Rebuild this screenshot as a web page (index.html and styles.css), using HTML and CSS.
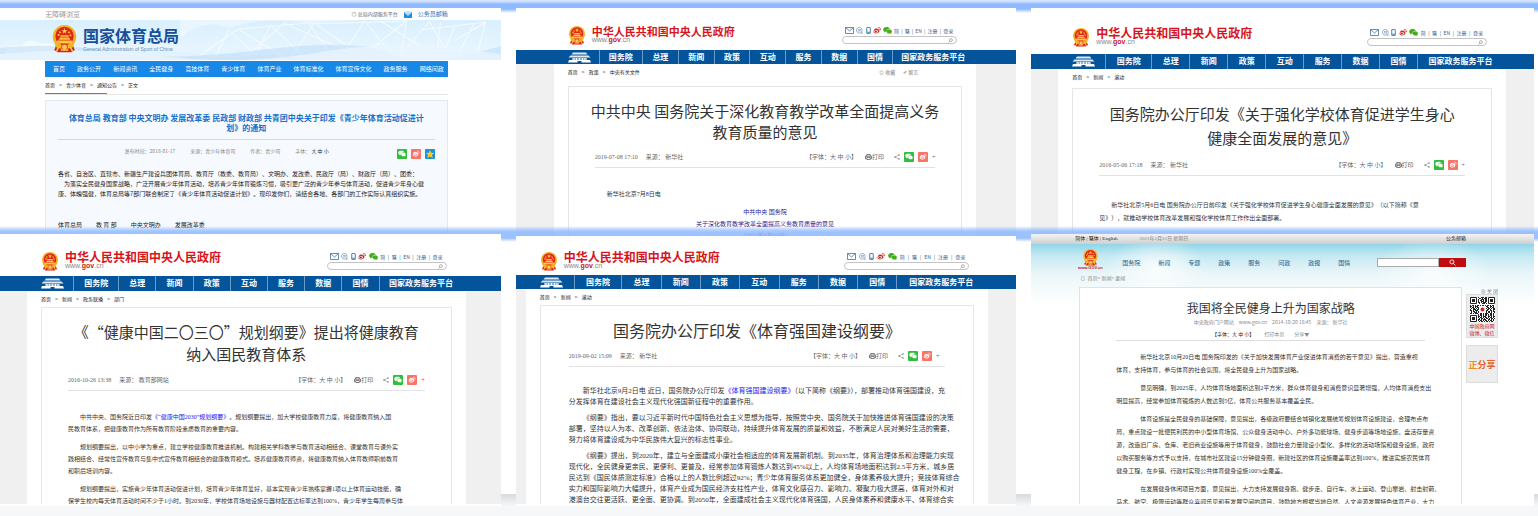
FILE: index.html
```html
<!DOCTYPE html>
<html lang="zh-CN">
<head>
    <meta charset="UTF-8">
    <meta name="viewport" content="width=device-width, initial-scale=1.0">
    <title>体育政策文件</title>
    <link rel="stylesheet" href="styles.css">
</head>
<body>
    <!-- Shared icons -->
    <svg class="sprite" aria-hidden="true">
        <symbol id="emblem" viewBox="0 0 36 38">
            <path d="M7 27h22l3 7-5 3H9l-5-3z" fill="#d8221b"/>
            <circle cx="18" cy="16" r="16" fill="#f3b229"/>
            <circle cx="18" cy="15" r="12.500" fill="#e02619"/>
            <path d="M18 4l1 3h3l-2.500 2 1 3-2.500-2-2.500 2 1-3-2.500-2h3z" fill="#ffdb4d"/>
            <path d="M11 9l2 1-1 1zM24 9l1 2-2-1zM9 13l2 0-1 2zM26 13l1 2-2-1z" fill="#ffdb4d" stroke="#ffdb4d"/>
            <path d="M10 20l2-3h12l2 3zM12 16l1-2h10l1 2zM8 21h20v4H8z" fill="#ffc93c"/>
            <path d="M5 25q13 6 26 0l-1 5q-12 5-24 0z" fill="#f3b229"/>
            <circle cx="18" cy="30" r="4" fill="#f7cf4a" stroke="#d8221b"/>
            <path d="M10 30l-3 6M26 30l3 6M13 34h10" stroke="#ffcf45" stroke-width="2"/>
        </symbol>
        <symbol id="gate" viewBox="0 0 46 22">
            <path d="M10 1h26l3 4H7zM5 7h36l4 4H1z" fill="#dfe9f3"/>
            <path d="M8 12h30v4H8z" fill="#8fb0cf"/>
            <path d="M12 12v4M17 12v4M23 12v4M29 12v4M34 12v4" stroke="#fff" stroke-width="2"/>
            <path d="M2 16h42l2 5H27v-3h-8v3H0z" fill="#fff"/>
        </symbol>
        <symbol id="mail" viewBox="0 0 18 14">
            <path d="M1 1h16v12H1zM1 1l8 7 8-7" fill="none" stroke="#2f6ba5" stroke-width="1.500"/>
        </symbol>
        <symbol id="chat" viewBox="0 0 16 16">
            <path d="M8 1a6.500 6.500 0 1 0 3 12l3 2-1-4A6.500 6.500 0 0 0 8 1zM4.500 6h7M4.500 9h7" fill="none" stroke="#3f78ae" stroke-width="1.300"/>
        </symbol>
        <symbol id="phone" viewBox="0 0 10 16">
            <rect x="1" y="1" width="8" height="14" rx="1" fill="none" stroke="#2f6ba5" stroke-width="2"/>
            <path d="M2 12h6" stroke="#2f6ba5" stroke-width="2"/>
        </symbol>
        <symbol id="weibo" viewBox="0 0 18 16">
            <path d="M8 5c2-2 5-1 4 1 3 0 3 3 2 5-2 4-9 5-12 2C-1 10 4 3 7 3c1 0 2 1 1 2z" fill="currentColor"/>
            <ellipse cx="7" cy="10" rx="4" ry="3" fill="#fff"/>
            <circle cx="6.500" cy="10" r="2" fill="#333"/>
            <path d="M11 1c4-1 7 2 6 6M12 4c2 0 3 1 2 3" fill="none" stroke="currentColor" stroke-width="1.500"/>
        </symbol>
        <symbol id="weibo-flat" viewBox="0 0 18 16">
            <path d="M8 5c2-2 5-1 4 1 3 0 3 3 2 5-2 4-9 5-12 2C-1 10 4 3 7 3c1 0 2 1 1 2z" fill="currentColor"/>
            <ellipse cx="7" cy="10" rx="4" ry="3" fill="#fa7366"/>
            <circle cx="6.500" cy="10" r="2" fill="currentColor"/>
            <path d="M11 1c4-1 7 2 6 6M12 4c2 0 3 1 2 3" fill="none" stroke="currentColor" stroke-width="1.500"/>
        </symbol>
        <symbol id="wechat" viewBox="0 0 20 16">
            <path d="M8 0C3 0 0 3 0 6c0 2 1 3 3 4l-1 3 3-2h3c-1-5 3-7 7-7-1-3-4-4-7-4z" fill="currentColor"/>
            <path d="M14 5c-3 0-6 2-6 5s3 5 6 5h2l3 1-1-2c1-1 2-2 2-4 0-3-3-5-6-5z" fill="currentColor"/>
        </symbol>
        <symbol id="share" viewBox="0 0 12 12">
            <path d="M10 2L2 6l8 4" fill="none" stroke="#777"/>
            <circle cx="10" cy="2" r="1.500" fill="#777"/><circle cx="2" cy="6" r="1.500" fill="#777"/><circle cx="10" cy="10" r="1.500" fill="#777"/>
        </symbol>
        <symbol id="print" viewBox="0 0 16 14">
            <path d="M4 5V1h8v4M3 11H1V5h14v6h-2M4 8h8v5H4z" fill="none" stroke="#555" stroke-width="1.800"/>
        </symbol>
        <symbol id="lens" viewBox="0 0 12 12">
            <circle cx="7" cy="5" r="3.500" fill="none" stroke="currentColor" stroke-width="1.500"/>
            <path d="M4.500 7.500L1 11" stroke="currentColor" stroke-width="1.500"/>
        </symbol>
        <symbol id="star" viewBox="0 0 20 20">
            <path d="M10 2l2.500 5.500 6 .5-4.500 4 1.500 6-5.500-3-5.500 3L6 12 1.500 8l6-.5z" fill="currentColor"/>
        </symbol>
    </svg>

    <main>
        <section class="row row-top">
            <!-- 国家体育总局 -->
            <article class="shot sport">
                <div class="sport-top">
                    <a href="#">无障碍浏览</a>
                    <span class="sport-links"><a href="#">◎ 总局内部服务平台</a>
                        <svg width="8" height="7" viewBox="0 0 16 14"><path d="M0 2h16v12H0z" fill="#1f8fe6"/><path d="M1 3l7 6 7-6M3 0h10v3H3z" fill="#9bd3fb" stroke="#fff"/></svg>
                        <a class="mailbox" href="#">公务员邮箱</a></span>
                </div>
                <header class="sport-banner">
                    <svg class="sport-bg" viewBox="0 0 500 40" preserveAspectRatio="none" aria-hidden="true">
                        <path d="M5 32q5-8 16-6 8-10 20-2 12-3 17 5l10 10H0z" fill="#fff" opacity=".6"/>
                        <path d="M180 18q20-20 50-10 30-12 80-5l50-3H180z" fill="#fff" opacity=".4"/>
                        <path d="M200 35L238 9l45 28M215 38l13-28 28 25 14-30 35 33M238 9l70-6 26 36M246 36l38-33 51 23M290 38l24-35 50 35M310 4l96-3-48 38M340 38L364 1l31 38M380 1l60 38 15-34M395 39l34-37 22 37M406 2l-7 38M440 2l-4 37M420 10l65-8-10 37M455 20l29-17M456 37l18-34" fill="none" stroke="#fff" opacity=".7"/>
                        <path d="M0 28q60-6 110 4t150-2 130 4 110-8v14H0z" fill="#b9daf8" opacity=".5"/>
                        <path d="M0 34q80-8 160 2t160-4 180 2v6H0z" fill="#e8f5ff" opacity=".8"/>
                    </svg>
                    <svg class="sport-emblem" width="27" height="28"><use href="#emblem"/></svg>
                    <div class="sport-name">
                        <strong>国家体育总局</strong>
                        <small>General Administration of Sport of China</small>
                    </div>
                </header>
                <nav class="sport-nav">
                    <a href="#">首页</a><a href="#">政务公开</a><a href="#">新闻资讯</a><a href="#">全民健身</a><a href="#">竞技体育</a><a href="#">青少体育</a><a href="#">体育产业</a><a href="#">体育标准化</a><a href="#">体育宣传文化</a><a href="#">政务服务</a><a href="#">网络问政</a>
                </nav>
                <div class="crumb sport-crumb"><a href="#">首页</a><i>&gt;</i><a href="#">青少体育</a><i>&gt;</i><a href="#">通知公告</a><i>&gt;</i><span>正文</span></div>
                <div class="sport-doc">
                    <h1>体育总局 教育部 中央文明办 发展改革委 民政部 财政部 共青团中央关于印发《青少年体育活动促进计<br>划》的通知</h1>
                    <div class="sport-meta">
                        <span>发布时间：2018-01-17</span><span>来源：青少年体育司</span><span>作者：青少司</span><span>字体： <b>大 中 小</b></span>
                        <div class="sport-share">
                            <svg class="tile green" viewBox="-3 -4 26 26"><use href="#wechat" width="20" height="16"/></svg>
                            <svg class="tile red" viewBox="-3 -4 26 26"><use href="#weibo-flat" width="20" height="17"/></svg>
                            <svg class="tile blue" viewBox="0 0 20 20"><use href="#star"/></svg>
                        </div>
                    </div>
                    <div class="sport-text">
                        <p>各省、自治区、直辖市、新疆生产建设兵团体育局、教育厅（教委、教育局）、文明办、发改委、民政厅（局）、财政厅（局）、团委：</p>
                        <p class="indent">为落实全民健身国家战略，广泛开展青少年体育活动，培养青少年体育锻炼习惯，吸引更广泛的青少年参与体育活动，促进青少年身心健康、体魄强健，体育总局等7部门联合制定了《青少年体育活动促进计划》。现印发你们，请结合各地、各部门的工作实际认真组织实施。</p>
                    </div>
                    <div class="signers"><span>体育总局</span><span>教 育 部</span><span>中央文明办</span><span>发展改革委</span></div>
                </div>
            </article>

            <article class="shot gov gov-a">
                <header class="gov-head">
                    <svg width="18" height="19"><use href="#emblem"/></svg>
                    <div class="brand"><strong>中华人民共和国中央人民政府</strong><small>www.<b>gov</b>.cn</small></div>
                    <div class="tools">
                        <div class="tool-row">
                            <svg width="9" height="7"><use href="#mail"/></svg><svg width="7" height="7"><use href="#chat"/></svg><svg width="5" height="7"><use href="#phone"/></svg><svg class="wb" width="8" height="7"><use href="#weibo"/></svg><svg class="wx" width="9" height="7"><use href="#wechat"/></svg>
                            <a href="#">简</a>|<a href="#">繁</a>|<a href="#">EN</a>|<a href="#">注册</a>|<a href="#">登录</a>
                        </div>
                        <form class="search"><input type="text" aria-label="搜索"><button type="button" aria-label="搜索"><svg width="5" height="5"><use href="#lens"/></svg></button></form>
                    </div>
                </header>
                <nav class="gov-nav">
                    <a href="#" aria-label="首页"><svg width="23" height="11"><use href="#gate"/></svg></a><a href="#">国务院</a><a href="#">总理</a><a href="#">新闻</a><a href="#">政策</a><a href="#">互动</a><a href="#">服务</a><a href="#">数据</a><a href="#">国情</a><a href="#">国家政务服务平台</a>
                </nav>
                <div class="gov-page">
                    <div class="crumb"><a href="#">首页</a><i>&gt;</i><a href="#">政策</a><i>&gt;</i><a href="#">中央有关文件</a>
                        <span class="keep"><a href="#">☆ 收藏</a><a href="#">✐ 留言</a></span></div>
                    <div class="doc">
                        <h1>中共中央 国务院关于深化教育教学改革全面提高义务<br>教育质量的意见</h1>
                        <div class="meta">
                            <span>2019-07-08 17:10</span><span>来源： 新华社</span>
                            <span class="size">【字体：大 中 小】</span><a href="#"><svg width="7" height="6"><use href="#print"/></svg>打印</a>
                            <span class="share"><svg width="6" height="6"><use href="#share"/></svg><svg class="tile green" viewBox="-3 -4 26 26"><use href="#wechat" width="20" height="16"/></svg><svg class="tile red" viewBox="-3 -4 26 26"><use href="#weibo-flat" width="20" height="17"/></svg>+</span>
                        </div>
                        <div class="text">
                            <p>新华社北京7月8日电</p>
                            <p class="notice">中共中央 国务院<br>关于深化教育教学改革全面提高义务教育质量的意见<br>（2019年6月23日）</p>
                        </div>
                    </div>
                </div>
            </article>

            <article class="shot gov gov-b">
                <header class="gov-head">
                    <svg width="18" height="19"><use href="#emblem"/></svg>
                    <div class="brand"><strong>中华人民共和国中央人民政府</strong><small>www.<b>gov</b>.cn</small></div>
                    <div class="tools">
                        <div class="tool-row">
                            <svg width="9" height="7"><use href="#mail"/></svg><svg width="7" height="7"><use href="#chat"/></svg><svg width="5" height="7"><use href="#phone"/></svg><svg class="wb" width="8" height="7"><use href="#weibo"/></svg><svg class="wx" width="9" height="7"><use href="#wechat"/></svg>
                            <a href="#">简</a>|<a href="#">繁</a>|<a href="#">EN</a>|<a href="#">注册</a>|<a href="#">登录</a>
                        </div>
                        <form class="search"><input type="text" aria-label="搜索"><button type="button" aria-label="搜索"><svg width="5" height="5"><use href="#lens"/></svg></button></form>
                    </div>
                </header>
                <nav class="gov-nav">
                    <a href="#" aria-label="首页"><svg width="23" height="11"><use href="#gate"/></svg></a><a href="#">国务院</a><a href="#">总理</a><a href="#">新闻</a><a href="#">政策</a><a href="#">互动</a><a href="#">服务</a><a href="#">数据</a><a href="#">国情</a><a href="#">国家政务服务平台</a>
                </nav>
                <div class="gov-page">
                    <div class="crumb"><a href="#">首页</a><i>&gt;</i><a href="#">新闻</a><i>&gt;</i><a href="#">滚动</a></div>
                    <div class="doc">
                        <h1>国务院办公厅印发《关于强化学校体育促进学生身心<br>健康全面发展的意见》</h1>
                        <div class="meta">
                            <span>2016-05-06 17:18</span><span>来源： 新华社</span>
                            <span class="size">【字体：大 中 小】</span><a href="#"><svg width="7" height="6"><use href="#print"/></svg>打印</a>
                            <span class="share"><svg width="6" height="6"><use href="#share"/></svg><svg class="tile green" viewBox="-3 -4 26 26"><use href="#wechat" width="20" height="16"/></svg><svg class="tile red" viewBox="-3 -4 26 26"><use href="#weibo-flat" width="20" height="17"/></svg>+</span>
                        </div>
                        <div class="text">
                            <p>新华社北京5月6日电 国务院办公厅日前印发《关于强化学校体育促进学生身心健康全面发展的意见》（以下简称《意<br>见》），就推动学校体育改革发展和强化学校体育工作作出全面部署。</p>
                        </div>
                    </div>
                </div>
            </article>
        </section>

        <section class="row row-bottom">
            <article class="shot gov gov-c">
                <header class="gov-head">
                    <svg width="18" height="19"><use href="#emblem"/></svg>
                    <div class="brand"><strong>中华人民共和国中央人民政府</strong><small>www.<b>gov</b>.cn</small></div>
                    <div class="tools">
                        <div class="tool-row">
                            <svg width="9" height="7"><use href="#mail"/></svg><svg width="7" height="7"><use href="#chat"/></svg><svg width="5" height="7"><use href="#phone"/></svg><svg class="wb" width="8" height="7"><use href="#weibo"/></svg><svg class="wx" width="9" height="7"><use href="#wechat"/></svg>
                            <a href="#">简</a>|<a href="#">繁</a>|<a href="#">EN</a>|<a href="#">注册</a>|<a href="#">登录</a>
                        </div>
                        <form class="search"><input type="text" aria-label="搜索"><button type="button" aria-label="搜索"><svg width="5" height="5"><use href="#lens"/></svg></button></form>
                    </div>
                </header>
                <nav class="gov-nav">
                    <a href="#" aria-label="首页"><svg width="23" height="11"><use href="#gate"/></svg></a><a href="#">国务院</a><a href="#">总理</a><a href="#">新闻</a><a href="#">政策</a><a href="#">互动</a><a href="#">服务</a><a href="#">数据</a><a href="#">国情</a><a href="#">国家政务服务平台</a>
                </nav>
                <div class="gov-page">
                    <div class="crumb"><a href="#">首页</a><i>&gt;</i><a href="#">新闻</a><i>&gt;</i><a href="#">政务联播</a><i>&gt;</i><a href="#">部门</a></div>
                    <div class="doc">
                        <h1>《“健康中国二〇三〇”规划纲要》提出将健康教育<br>纳入国民教育体系</h1>
                        <div class="meta">
                            <span>2016-10-26 13:38</span><span>来源： 教育部网站</span>
                            <span class="size">【字体：大 中 小】</span><a href="#"><svg width="7" height="6"><use href="#print"/></svg>打印</a>
                            <span class="share"><svg width="6" height="6"><use href="#share"/></svg><svg class="tile green" viewBox="-3 -4 26 26"><use href="#wechat" width="20" height="16"/></svg><svg class="tile red" viewBox="-3 -4 26 26"><use href="#weibo-flat" width="20" height="17"/></svg>+</span>
                        </div>
                        <div class="text">
                            <p>中共中央、国务院近日印发<a href="#">《“健康中国2030”规划纲要》</a>。规划纲要提出，加大学校健康教育力度，将健康教育纳入国<br>民教育体系，把健康教育作为所有教育阶段素质教育的重要内容。</p>
                            <p>规划纲要提出，以中小学为重点，建立学校健康教育推进机制。构建相关学科教学与教育活动相结合、课堂教育与课外实<br>践相结合、经常性宣传教育与集中式宣传教育相结合的健康教育模式。培养健康教育师资，将健康教育纳入体育教师职前教育<br>和职后培训内容。</p>
                            <p>规划纲要提出，实施青少年体育活动促进计划，培育青少年体育爱好，基本实现青少年熟练掌握1项以上体育运动技能，确<br>保学生校内每天体育活动时间不少于1小时。到2030年，学校体育场地设施与器材配置达标率达到100%，青少年学生每周参与体</p>
                        </div>
                    </div>
                </div>
            </article>

            <article class="shot gov gov-d">
                <header class="gov-head">
                    <svg width="18" height="19"><use href="#emblem"/></svg>
                    <div class="brand"><strong>中华人民共和国中央人民政府</strong><small>www.<b>gov</b>.cn</small></div>
                    <div class="tools">
                        <div class="tool-row">
                            <svg width="9" height="7"><use href="#mail"/></svg><svg width="7" height="7"><use href="#chat"/></svg><svg width="5" height="7"><use href="#phone"/></svg><svg class="wb" width="8" height="7"><use href="#weibo"/></svg><svg class="wx" width="9" height="7"><use href="#wechat"/></svg>
                            <a href="#">简</a>|<a href="#">繁</a>|<a href="#">EN</a>|<a href="#">注册</a>|<a href="#">登录</a>
                        </div>
                        <form class="search"><input type="text" aria-label="搜索"><button type="button" aria-label="搜索"><svg width="5" height="5"><use href="#lens"/></svg></button></form>
                    </div>
                </header>
                <nav class="gov-nav">
                    <a href="#" aria-label="首页"><svg width="23" height="11"><use href="#gate"/></svg></a><a href="#">国务院</a><a href="#">总理</a><a href="#">新闻</a><a href="#">政策</a><a href="#">互动</a><a href="#">服务</a><a href="#">数据</a><a href="#">国情</a><a href="#">国家政务服务平台</a>
                </nav>
                <div class="gov-page">
                    <div class="crumb"><a href="#">首页</a><i>&gt;</i><a href="#">新闻</a><i>&gt;</i><a href="#">滚动</a></div>
                    <div class="doc">
                        <h1>国务院办公厅印发《体育强国建设纲要》</h1>
                        <div class="meta">
                            <span>2019-09-02 15:09</span><span>来源： 新华社</span>
                            <span class="size">【字体：大 中 小】</span><a href="#"><svg width="7" height="6"><use href="#print"/></svg>打印</a>
                            <span class="share"><svg width="6" height="6"><use href="#share"/></svg><svg class="tile green" viewBox="-3 -4 26 26"><use href="#wechat" width="20" height="16"/></svg><svg class="tile red" viewBox="-3 -4 26 26"><use href="#weibo-flat" width="20" height="17"/></svg>+</span>
                        </div>
                        <div class="text">
                            <p>新华社北京9月2日电 近日，国务院办公厅印发<a href="#">《体育强国建设纲要》</a>（以下简称《纲要》），部署推动体育强国建设，充<br>分发挥体育在建设社会主义现代化强国新征程中的重要作用。</p>
                            <p>《纲要》指出，要以习近平新时代中国特色社会主义思想为指导，按照党中央、国务院关于加快推进体育强国建设的决策<br>部署，坚持以人为本、改革创新、依法治体、协同联动，持续提升体育发展的质量和效益，不断满足人民对美好生活的需要，<br>努力将体育建设成为中华民族伟大复兴的标志性事业。</p>
                            <p>《纲要》提出，到2020年，建立与全面建成小康社会相适应的体育发展新机制。到2035年，体育治理体系和治理能力实现<br>现代化，全民健身更亲民、更便利、更普及，经常参加体育锻炼人数达到45%以上，人均体育场地面积达到2.5平方米，城乡居<br>民达到《国民体质测定标准》合格以上的人数比例超过92%；青少年体育服务体系更加健全，身体素养极大提升；竞技体育综合<br>实力和国际影响力大幅提升，体育产业成为国民经济支柱性产业，体育文化感召力、影响力、凝聚力极大提高，体育对外和对<br>港澳台交往更活跃、更全面、更协调。到2050年，全面建成社会主义现代化体育强国，人民身体素养和健康水平、体育综合实</p>
                        </div>
                    </div>
                </div>
            </article>

            <!-- 旧版中国政府网 -->
            <article class="shot old">
                <div class="old-top"><span>简体 | 繁体 | English</span><time>2021年2月21日 星期日</time><a href="#">公务邮箱</a></div>
                <div class="old-sky">
                    <header class="old-head">
                        <div class="old-logo"><svg width="17" height="17"><use href="#emblem"/></svg><small>www.GOV.cn</small></div>
                        <nav class="old-nav"><a href="#">国务院</a><a href="#">新闻</a><a href="#">专题</a><a href="#">政策</a><a href="#">服务</a><a href="#">问政</a><a href="#">政报</a><a href="#">国情</a></nav>
                        <form class="old-search"><input type="text" aria-label="搜索"><button type="button" aria-label="搜索"><svg width="7" height="7"><use href="#lens" transform="matrix(-1 0 0 1 7 0)"/></svg></button></form>
                    </header>
                    <div class="old-crumb">⊙ &nbsp;首页&gt; 新闻&gt; 要闻</div>
                    <div class="old-main">
                        <div class="old-doc">
                            <h1>我国将全民健身上升为国家战略</h1>
                            <div class="old-meta"><span>中央政府门户网站</span><span>www.gov.cn</span><span>2014-10-20 18:45</span><span>来源： 新华社</span></div>
                            <div class="old-meta old-tools"><b>【字体：大 中 小】</b><span>打印本页</span><span>分享▼</span></div>
                            <div class="text">
                                <p>新华社北京10月20日电 国务院印发的《关于加快发展体育产业促进体育消费的若干意见》提出，营造重视<br>体育，支持体育，参与体育的社会氛围，将全民健身上升为国家战略。</p>
                                <p>意见明确，到2025年，人均体育场地面积达到2平方米，群众体育健身和消费意识显著增强，人均体育消费支出<br>明显提高，经常参加体育锻炼的人数达到5亿，体育公共服务基本覆盖全民。</p>
                                <p>体育设施是全民健身的基础保障，意见提出，各级政府要结合城镇化发展统筹规划体育设施建设，合理布点布<br>局，重点建设一批便民利民的中小型体育场馆、公众健身活动中心、户外多功能球场、健身步道等场地设施，盘活存量资<br>源，改造旧厂房、仓库、老旧商业设施等用于体育健身，鼓励社会力量建设小型化、多样化的活动场馆和健身设施，政府<br>以购买服务等方式予以支持，在城市社区建设15分钟健身圈，新建社区的体育设施覆盖率达到100%，推进实施农民体育<br>健身工程，在乡镇、行政村实现公共体育健身设施100%全覆盖。</p>
                                <p>在发展健身休闲项目方面，意见提出，大力支持发展健身跑、健步走、自行车、水上运动、登山攀岩、射击射箭、<br>马术、航空、极限运动等群众喜闻乐见和有发展空间的项目，鼓励地方根据当地自然、人文资源发展特色体育产业，大力</p>
                            </div>
                        </div>
                        <aside class="old-side">
                            <span class="close">⊗ 关 闭</span>
                            <div class="qr">
                                <svg width="25" height="25" viewBox="0 0 25 25" stroke="#222" fill="none">
                                    <path fill="#fff" stroke="none" d="M0 0h25v25H0z"/>
                                    <path d="M.5.5h6v6h-6zM18.500.5h6v6h-6zM.5 18.500h6v6h-6z"/>
                                    <path stroke-width="3" d="M2 3.500h3M20 3.500h3M2 21.500h3"/>
                                    <path stroke-dasharray="1 2 3 1 2 1" d="M8 .5h9M8 2.500h9M8 4.500h9M9 6.500h8M0 12.500h25M1 15.500h24"/>
                                    <path stroke-dasharray="2 1 1 1 3 2" d="M9 1.500h8M8 5.500h9M0 9.500h25M0 13.500h24M0 16.500h24M8 19.500h17M8 22.500h16"/>
                                    <path stroke-dasharray="1 1 2 1" d="M8 3.500h9M0 8.500h25M0 10.500h25M1 11.500h24M1 14.500h24M8 17.500h17M8 18.500h17M8 20.500h17M9 21.500h16M8 23.500h17M9 24.500h15"/>
                                    <path fill="#fff" stroke="none" d="M9 9h7v7H9z"/><circle cx="12.500" cy="12.500" r="2" fill="#d8221b" stroke="none"/>
                                </svg>
                                <span>中国政府网<br>微博、微信</span>
                            </div>
                            <button type="button" class="share-box"><em>正</em>分享</button>
                        </aside>
                    </div>
                </div>
            </article>
        </section>
    </main>
</body>
</html>
```
FILE: styles.css
```css
* {
    box-sizing: border-box;
}

body {
    margin: 0;
    background: #f5f7f9;
    font-family: "Noto Sans CJK SC", sans-serif;
    font-size: 6px;
    color: #333;
    overflow-x: hidden;
    text-spacing-trim: space-all;
}

a {
    color: inherit;
    text-decoration: none;
}

h1,
p,
form {
    margin: 0;
}

h1 {
    font-weight: normal;
    text-align: center;
    white-space: nowrap;
}

svg {
    flex: none;
}

i {
    font-style: normal;
}

input,
button {
    min-width: 0;
    padding: 0;
    border: 0;
    background: none;
    font: inherit;
}

.sprite {
    display: none;
}

/* Two rows of three pages, a blue band over each row */
.row {
    display: grid;
    grid-template-columns: 501fr 501fr 503fr;
    column-gap: 15px;
    padding-right: 4px;
}

.row-top {
    height: 238px;
    padding-top: 8px;
    background: linear-gradient(#dbe8fb 0, #c4daff 2px, #8fbaff 4px, #8fbaff 9px, #fff 13px);
}

.row-bottom {
    position: relative;
    height: 282px;
    margin-top: -12px;
    padding-top: 8px;
    background:
        linear-gradient(rgba(143, 186, 255, 0) 0, rgba(143, 186, 255, .7) 4px, rgba(133, 180, 255, .8) 6px, rgba(143, 186, 255, .9) 12px, rgba(255, 255, 255, 0) 16px) top / 100% 16px no-repeat,
        linear-gradient(transparent 12px, #fff 12px, #fff 268px, #d7dade 268px, #f5f7f9 280px);
}

.shot {
    overflow: hidden;
    min-width: 0;
    background: #fff;
}

.row-bottom .shot {
    height: 272px;
    border-bottom: 2px solid #fff;
}

.crumb {
    display: flex;
    font-size: 5px;
    line-height: 16px;
    color: #222;
}

.crumb i {
    width: 11px;
    text-align: center;
}

.tile {
    width: 10px;
    height: 10px;
    border-radius: 1px;
    color: #fff;
}

.green {
    background: #32bd3d;
}

.red {
    background: #fa7366;
}

.blue {
    background: #1593df;
    color: #ffc425;
}

/* 国家体育总局 */
.sport-top {
    display: flex;
    justify-content: space-between;
    align-items: center;
    height: 12px;
    padding: 0 53px 0 45px;
    font-size: 7px;
    line-height: 12px;
    color: #999;
}

.sport-links {
    display: flex;
    align-items: center;
    gap: 6px;
    font-size: 5px;
    color: #666;
}

.mailbox {
    font-size: 6px;
    color: #1872c5;
}

.sport-banner {
    position: relative;
    display: flex;
    gap: 5px;
    height: 40px;
    padding: 5px 0 0 51px;
    background: linear-gradient(#d9effd, #e6f5ff 70%, #dff0fd);
}

.sport-bg {
    position: absolute;
    inset: 0;
    width: 100%;
    height: 100%;
}

.sport-emblem,
.sport-name {
    position: relative;
}

.sport-name strong,
.sport-name small {
    display: block;
    white-space: nowrap;
}

.sport-name strong {
    font-size: 16px;
    line-height: 21px;
    color: #174f9b;
}

.sport-name small {
    font: 5px/6px "Liberation Sans", sans-serif;
    color: #6d8fb8;
}

.sport-nav {
    display: flex;
    justify-content: space-between;
    margin: 1px 53px 0 45px;
    padding: 0 4px 0 8px;
    background: #1888e8;
    font-size: 6px;
    line-height: 16px;
    color: #fff;
    white-space: nowrap;
}

.sport-crumb {
    height: 18px;
    margin: 0 53px 5px 45px;
    border-bottom: 1px solid #e5e5e5;
    background: linear-gradient(#1e96e6, #1e96e6) left bottom / 62px 1px no-repeat;
}

.sport-doc {
    height: 200px;
    margin: 0 53px 0 45px;
    padding: 12px 12px 0;
    border: 1px solid #e1eaf2;
    background: #f6faff;
}

.sport-doc h1 {
    padding-bottom: 6px;
    border-bottom: 1px solid #d2d8dc;
    font-size: 8px;
    font-weight: bold;
    line-height: 10px;
    color: #1c70c9;
}

.sport-meta {
    display: flex;
    justify-content: flex-end;
    gap: 15px;
    padding-top: 6px;
    font-size: 5px;
    line-height: 10px;
    color: #888;
}

.sport-meta b {
    font-weight: normal;
    color: #222;
}

.sport-share {
    display: flex;
    gap: 4px;
    margin: 3px 0 0 53px;
}

.sport-text {
    padding-top: 10px;
    line-height: 10px;
    color: #222;
}

.indent {
    text-indent: 1em;
}

.signers {
    display: flex;
    gap: 14px;
    padding-top: 21px;
    line-height: 10px;
    color: #222;
}

/* 中国政府网: the four pages differ in their side margins and heights */
.gov {
    --left: 27px;
    --right: 28px;
    --top: 18px;
    --head: 42px;
    --tools: 120px;
    --title: 15px;
    --title-line: 22px;
    --inset: 26px;
    background: #f0f0f0;
}

.gov-a {
    --left: 38px;
    --right: 40px;
    --tools: 115px;
    --title-line: 21px;
}

.gov-b {
    --top: 20px;
    --head: 46px;
    --title-line: 24px;
}

.gov-c {
    --right: 35px;
}

.gov-d {
    --left: 10px;
    --top: 16px;
    --head: 39px;
    --tools: 125px;
    --title: 16px;
    --inset: 28px;
}

.row-bottom .gov-d {
    height: 270px;
    margin-top: 2px;
    text-spacing-trim: normal;
}

.gov-head {
    display: flex;
    height: var(--head);
    padding: var(--top) calc(var(--right) + 19px) 0 calc(var(--left) + 14px);
    background: #fff;
}

.brand {
    margin-left: 6px;
    white-space: nowrap;
}

.brand strong,
.brand small {
    display: block;
}

.brand strong {
    font-size: 12px;
    line-height: 10px;
    color: #d7161b;
}

.gov-a .brand strong {
    font-size: 11px;
}

.brand small {
    font: 7px/8px "Liberation Sans", sans-serif;
    color: #888;
}

.brand b {
    color: #c9161b;
}

.tools {
    width: var(--tools);
    margin-left: auto;
}

.tool-row {
    display: flex;
    justify-content: space-between;
    align-items: center;
    height: 8px;
    padding: 0 4px 0 3px;
    font-size: 5px;
    color: #35618e;
}

.wb {
    color: #d92b21;
}

.wx {
    color: #43ae18;
}

.search {
    display: flex;
    align-items: center;
    height: 8px;
    margin-top: 2px;
    padding: 0 3px;
    border: 1px solid #c4c4c4;
    border-radius: 4px;
}

.search input {
    flex: 1;
    height: 6px;
}

.search button,
.old-search button {
    display: flex;
    align-items: center;
    justify-content: center;
    color: #888;
}

.gov-nav {
    display: grid;
    grid-template-columns: 33fr 46fr repeat(7, 38fr) 86fr;
    height: 14px;
    padding: 0 calc(var(--right) + 3px) 0 calc(var(--left) + 14px);
    background: #03549a;
    font-size: 8px;
    font-weight: bold;
    line-height: 14px;
    color: #fff;
    text-align: center;
    white-space: nowrap;
}

.gov-b .gov-nav,
.gov-c .gov-nav {
    height: 15px;
}

.gov-nav a + a {
    border-left: 1px solid #6b9cc8;
}

.gov-nav a:first-child {
    display: flex;
    align-items: center;
}

.gov-page {
    margin: 0 var(--right) 0 var(--left);
    padding: 0 14px;
    background: #fff;
}

.gov-a .crumb {
    margin-bottom: 6px;
}

.gov-b .crumb {
    margin-bottom: 3px;
}

.crumb a:first-child {
    color: #000;
}

.keep {
    display: flex;
    gap: 8px;
    margin: 0 44px 0 auto;
}

.keep a,
.keep a:first-child {
    color: #777;
}

.doc {
    height: 240px;
    padding: 13px var(--inset) 0;
    border: 1px solid #e6e6e6;
}

/* long titles run a little past the text column */
.doc h1 {
    margin: 0 -20px;
    font-size: var(--title);
    line-height: var(--title-line);
    color: #333;
}

.meta {
    display: flex;
    align-items: center;
    gap: 8px;
    height: 26px;
    padding-top: 4px;
    border-bottom: 1px solid #e2e2e2;
    font-family: "Liberation Serif", "Noto Sans CJK SC", serif;
    font-size: 6px;
    color: #666;
    white-space: nowrap;
}

.meta a {
    display: flex;
    align-items: center;
}

.size {
    margin-left: auto;
}

.share {
    display: flex;
    align-items: center;
    gap: 4px;
    margin-left: 2px;
}

.gov-d .share {
    padding-right: 6px;
}

.text {
    padding-top: 20px;
    font-family: "Liberation Serif", "Noto Sans CJK SC", serif;
    font-size: 6px;
    line-height: 12px;
    color: #333;
    white-space: nowrap;
}

.text p {
    margin-bottom: 6px;
    text-indent: 2em;
}

.text a {
    color: #1a17f0;
}

.text .notice {
    color: #2b1e93;
    text-align: center;
    text-indent: 0;
}

.gov-b .text {
    padding-top: 23px;
    line-height: 13px;
}

.gov-d .text {
    padding-top: 19px;
    font-size: 7px;
    line-height: 11px;
}

.gov-d .text p {
    margin-bottom: 5px;
}

/* 旧版中国政府网 */
.old {
    text-spacing-trim: normal;
}

.old-top {
    display: flex;
    height: 10px;
    padding: 0 68px 0 44px;
    background: linear-gradient(#f4f4f4, #cfcfcf);
    font-family: "Liberation Serif", "Noto Sans CJK SC", serif;
    font-size: 5px;
    line-height: 9px;
    color: #222;
}

.old-top time {
    margin: 0 auto 0 22px;
    color: #888;
}

.old-sky {
    background:
        radial-gradient(ellipse at 25% 24px, rgba(255, 255, 255, .8), transparent 50px),
        radial-gradient(ellipse at 80% 30px, rgba(255, 255, 255, .7), transparent 60px),
        linear-gradient(#8fd5e8, #c5e9f2 12px, #eaf6f9 30px, #fff 60px);
}

.old-head {
    display: flex;
    height: 29px;
    padding: 5px 68px 0 49px;
}

.old-logo {
    display: flex;
    flex-direction: column;
    align-items: center;
    width: 20px;
}

.old-logo small {
    font: bold 4px/4px "Liberation Sans", sans-serif;
    color: #c9161b;
}

.old-nav {
    display: flex;
    justify-content: space-between;
    width: 228px;
    margin-left: 22px;
    font-size: 6px;
    line-height: 28px;
    color: #235f8c;
}

.old-search {
    display: flex;
    width: 89px;
    height: 9px;
    margin: 9px 0 0 auto;
}

.old-search input {
    flex: 1;
    border: 1px solid #aaa;
    background: #fff;
}

.old-search button {
    width: 27px;
    background: #c00b10;
    color: #fff;
}

.old-crumb {
    height: 14px;
    padding-left: 49px;
    font-size: 5px;
    line-height: 10px;
    color: #888;
}

.old-main {
    display: flex;
    gap: 4px;
    padding: 0 36px 0 48px;
}

.old-doc {
    flex: 1;
    min-width: 0;
    height: 230px;
    padding: 12px 36px 0;
    border: 1px solid #dde4e6;
    background: #fff;
}

.old-doc h1 {
    font-size: 12px;
    line-height: 16px;
}

.old-meta {
    display: flex;
    justify-content: center;
    gap: 5px;
    font-size: 5px;
    line-height: 12px;
    color: #888;
}

.old-tools {
    gap: 10px;
    padding-right: 20px;
    border-bottom: 1px solid #ddd;
}

.old-tools b {
    font-weight: normal;
    color: #222;
}

.old-doc .text {
    padding-top: 10px;
    line-height: 13px;
}

.old-doc .text p {
    margin-bottom: 5px;
    text-indent: 4em;
}

.old-side {
    width: 32px;
}

.close {
    display: block;
    font-size: 5px;
    line-height: 7px;
    color: #777;
    text-align: right;
}

.qr,
.share-box {
    display: flex;
    flex-direction: column;
    align-items: center;
    width: 32px;
    border: 1px solid #ddd;
    background: #ececec;
}

.qr {
    height: 44px;
    padding-top: 2px;
    font-size: 5px;
    line-height: 7px;
    color: #c9161b;
}

.share-box {
    flex-direction: row;
    justify-content: center;
    height: 38px;
    margin-top: 7px;
    font-size: 9px;
    font-weight: bold;
    color: #e8622a;
}

.share-box em {
    font-style: normal;
    color: #f08c28;
}
```
